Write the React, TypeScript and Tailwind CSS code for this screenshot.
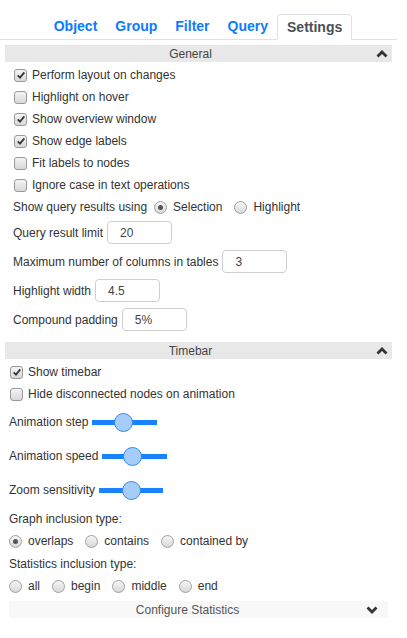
import React from "react";

function Check({ checked }: { checked?: boolean }) {
    return (
        <span className="flex h-[13px] w-[13px] shrink-0 items-center justify-center rounded-[3px] border border-[#9a9a9a] bg-gradient-to-b from-[#f4f4f4] to-[#d8d8d8]">
            {checked && (
                <svg viewBox="0 0 12 12" className="h-[10px] w-[10px]">
                    <path d="M2 6.5 L4.8 9.2 L10 2.8" fill="none" stroke="#3a3a3a" strokeWidth="2.2" />
                </svg>
            )}
        </span>
    );
}

function Radio({ checked }: { checked?: boolean }) {
    return (
        <span className="flex h-[13px] w-[13px] shrink-0 items-center justify-center rounded-full border border-[#a0a0a0] bg-gradient-to-b from-[#f6f6f6] to-[#d8d8d8]">
            {checked && <span className="h-[5px] w-[5px] rounded-full bg-[#555]" />}
        </span>
    );
}

function Chevron({ down }: { down?: boolean }) {
    return (
        <svg viewBox="0 0 12 8" className="h-[8px] w-[12px]">
            <path d={down ? "M1.5 1.5 L6 6 L10.5 1.5" : "M1.5 6.5 L6 2 L10.5 6.5"} fill="none" stroke="#333" strokeWidth="2.8" />
        </svg>
    );
}

function SectionHeader({ title }: { title: string }) {
    return (
        <div className="mx-[5px] flex h-[17px] items-center bg-[#e8e8e8] text-[#444]">
            <span className="flex-1 text-center">{title}</span>
            <span className="flex w-[16px] justify-start">
                <Chevron />
            </span>
        </div>
    );
}

function CheckRow({ label, checked }: { label: string; checked?: boolean }) {
    return (
        <div className="flex h-[22px] items-center gap-[5px]">
            <Check checked={checked} />
            <span>{label}</span>
        </div>
    );
}

function InputRow({ label, value }: { label: string; value: string }) {
    return (
        <div className="flex h-[23px] items-center gap-[4px]">
            <span>{label}</span>
            <div className="flex h-[23px] w-[65px] items-center rounded-[4px] border border-[#cfcfcf] pl-[12px] text-[#444]">
                {value}
            </div>
        </div>
    );
}

function Slider({ label, left, width = 65 }: { label: string; left: number; width?: number }) {
    return (
        <div className="flex h-[34px] items-center gap-[4px]">
            <span>{label}</span>
            <div className="relative flex h-[19px] items-center" style={{ width }}>
                <div className="h-[5px] w-full bg-[#1a82ff]" />
                <div
                    className="absolute top-0 h-[19px] w-[19px] rounded-full border border-[#2f8af0] bg-[#a6cdf8]"
                    style={{ left }}
                />
            </div>
        </div>
    );
}

function RadioOpt({ label, checked }: { label: string; checked?: boolean }) {
    return (
        <span className="flex items-center gap-[6px]">
            <Radio checked={checked} />
            <span>{label}</span>
        </span>
    );
}

export default function App() {
    const tabs = ["Object", "Group", "Filter", "Query"];

    return (
        <div className="w-[397px] bg-white pb-[20px] font-['Liberation_Sans',Arial,sans-serif] text-[12px] text-[#333]">
            {/* Tabs */}
            <div className="flex justify-center border-b border-[#dee2e6] pt-[14px]">
                {tabs.map((t) => (
                    <div key={t} className="flex h-[25px] items-center px-[9px] text-[14px] font-bold text-[#0d7bff]">
                        {t}
                    </div>
                ))}
                <div className="-mb-px flex h-[26px] items-center rounded-t-[4px] border border-b-white border-[#dee2e6] px-[9px] text-[14px] font-bold text-[#495057]">
                    Settings
                </div>
            </div>

            {/* General */}
            <div className="mt-[5px]">
                <SectionHeader title="General" />
                <div className="pl-[14px] pt-[2px]">
                    <CheckRow label="Perform layout on changes" checked />
                    <CheckRow label="Highlight on hover" />
                    <CheckRow label="Show overview window" checked />
                    <CheckRow label="Show edge labels" checked />
                    <CheckRow label="Fit labels to nodes" />
                    <CheckRow label="Ignore case in text operations" />
                </div>
                <div className="flex h-[22px] items-center pl-[13px]">
                    <span className="mr-[7px]">Show query results using</span>
                    <RadioOpt label="Selection" checked />
                    <span className="w-[12px]" />
                    <RadioOpt label="Highlight" />
                </div>
                <div className="flex flex-col gap-[6px] pl-[13px] pt-[3px]">
                    <InputRow label="Query result limit" value="20" />
                    <InputRow label="Maximum number of columns in tables" value="3" />
                    <InputRow label="Highlight width" value="4.5" />
                    <InputRow label="Compound padding" value="5%" />
                </div>
            </div>

            {/* Timebar */}
            <div className="mt-[11px]">
                <SectionHeader title="Timebar" />
                <div className="pl-[10px] pt-[2px]">
                    <CheckRow label="Show timebar" checked />
                    <CheckRow label="Hide disconnected nodes on animation" />
                </div>
                <div className="pl-[9px]">
                    <Slider label="Animation step" left={22} />
                    <Slider label="Animation speed" left={21} />
                    <Slider label="Zoom sensitivity" left={23} width={64} />
                    <div className="flex h-[23px] items-center">Graph inclusion type:</div>
                    <div className="flex h-[22px] items-center gap-[12px]">
                        <RadioOpt label="overlaps" checked />
                        <RadioOpt label="contains" />
                        <RadioOpt label="contained by" />
                    </div>
                    <div className="flex h-[23px] items-center pt-[1px]">Statistics inclusion type:</div>
                    <div className="flex h-[22px] items-center gap-[12px]">
                        <RadioOpt label="all" />
                        <RadioOpt label="begin" />
                        <RadioOpt label="middle" />
                        <RadioOpt label="end" />
                    </div>
                </div>
                <div className="mx-[9px] mt-[4px] flex h-[17px] items-center bg-[#f8f8f8] text-[#555]">
                    <span className="flex-1 text-center">Configure Statistics</span>
                    <span className="flex w-[22px] justify-start">
                        <Chevron down />
                    </span>
                </div>
            </div>
        </div>
    );
}
